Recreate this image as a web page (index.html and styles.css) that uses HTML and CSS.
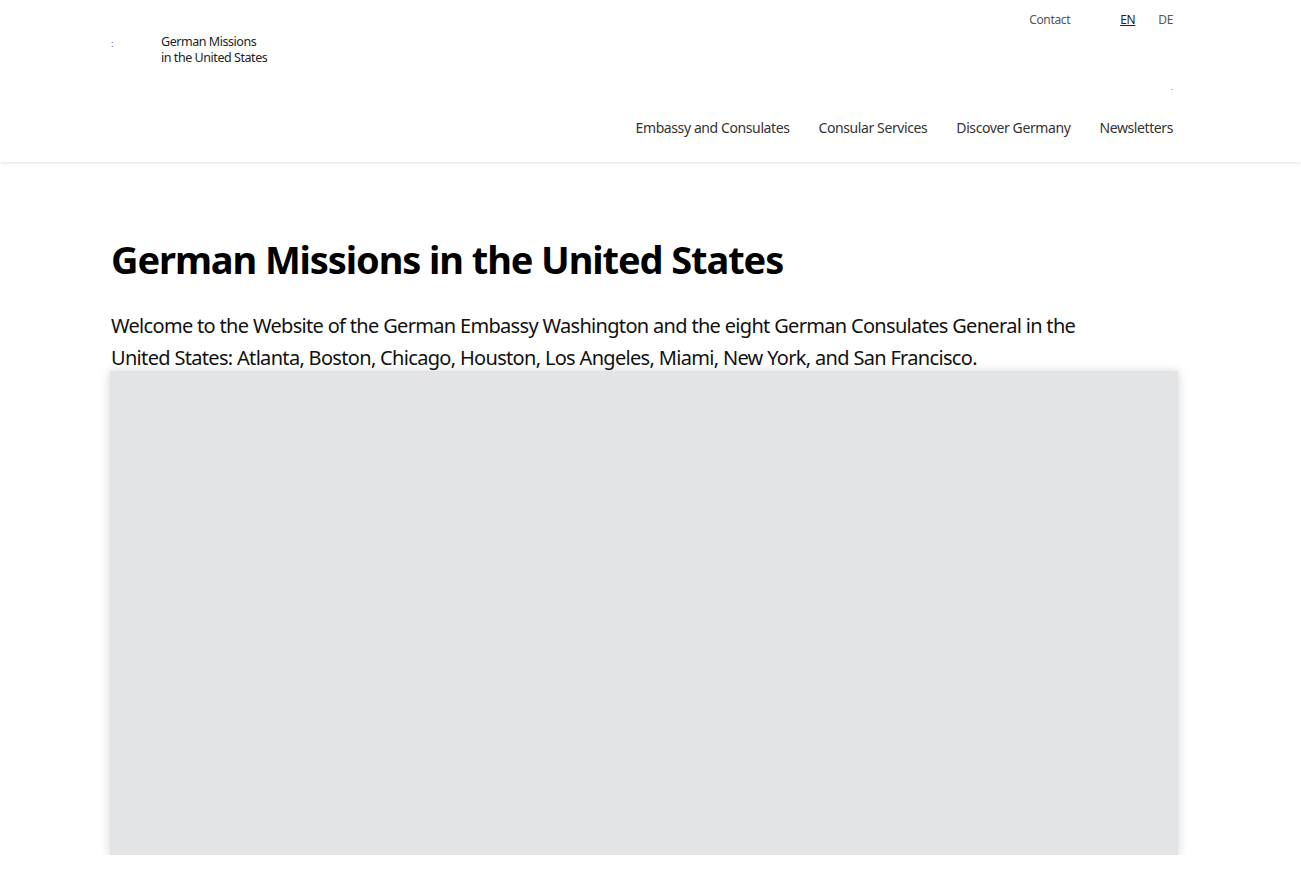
FILE: index.html
```html
<!DOCTYPE html>
<html lang="en">
<head>
<meta charset="utf-8">
<title>German Missions in the United States</title>
<link rel="stylesheet" href="styles.css">
</head>
<body>
<header class="site-header">
  <div class="header-inner">
    <div class="header-top">
      <a class="brand" href="#">
        <span class="brand-mark">:</span>
        <span class="brand-text">German Missions<br>in the United States</span>
      </a>
      <div class="meta">
        <div class="meta-links">
          <a class="contact" href="#">Contact</a>
          <a class="lang active" href="#">EN</a>
          <a class="lang lang-de" href="#">DE</a>
        </div>
        <span class="meta-dot">.</span>
      </div>
    </div>
    <nav class="main-nav">
      <a href="#">Embassy and Consulates</a>
      <a href="#">Consular Services</a>
      <a href="#">Discover Germany</a>
      <a href="#">Newsletters</a>
    </nav>
  </div>
</header>
<main class="content">
  <h1 class="title">German Missions in the United States</h1>
  <p class="intro">Welcome to the Website of the German Embassy Washington and the eight German Consulates General in the United States: Atlanta, Boston, Chicago, Houston, Los Angeles, Miami, New York, and San Francisco.</p>
  <div class="map-box"></div>
</main>
</body>
</html>
```
FILE: styles.css
```css
* { box-sizing: border-box; }
body {
  margin: 0;
  font-family: "Noto Sans", "Open Sans", sans-serif;
  color: #000;
  background: #fff;
}
a { color: inherit; text-decoration: none; }
.site-header {
  background: #fff;
  box-shadow: 0 1px 4px rgba(0,0,0,0.12);
  height: 162px;
  position: relative;
  z-index: 1;
}
.header-inner {
  width: 1062px;
  margin: 0 0 0 111px;
  display: flex;
  flex-direction: column;
}
.header-top {
  display: flex;
  justify-content: space-between;
  align-items: flex-start;
  height: 110px;
}
.brand {
  display: flex;
  align-items: flex-start;
  margin-top: 34px;
  gap: 46px;
  font-size: 12.5px;
  line-height: 16px;
  color: #222;
  letter-spacing: -0.45px;
}
.brand-mark { font-size: 9px; line-height: 20px; color: #555; width: 4px; }
.meta {
  display: flex;
  flex-direction: column;
  align-items: flex-end;
  padding-top: 11px;
}
.meta-links {
  display: flex;
  font-size: 12px;
  color: #555;
  letter-spacing: -0.35px;
}
.meta-links .contact { margin-right: 50px; }
.meta-links .lang-de { margin-left: 23px; }
.meta-links .active { text-decoration: underline; color: #222; }
.meta-dot { font-size: 8px; color: #666; margin-top: 55px; line-height: 8px; }
.main-nav {
  display: flex;
  justify-content: flex-end;
  gap: 29px;
  font-size: 14px;
  color: #333;
  letter-spacing: -0.4px;
  margin-top: 8px;
}
.content {
  width: 1068px;
  margin: 0 0 0 110px;
  padding-top: 74px;
}
.title {
  margin: 0 0 0 1px;
  font-size: 38px;
  line-height: 46px;
  font-weight: 700;
  letter-spacing: -1.1px;
}
.intro {
  margin: 28px 0 0 1px;
  font-size: 20px;
  line-height: 32px;
  max-width: 990px;
  letter-spacing: -0.68px;
  color: #111;
}
.map-box {
  margin-top: -3px;
  height: 484px;
  background: #e3e4e6;
  box-shadow: 0 1px 10px rgba(0,0,0,0.18);
}
```
